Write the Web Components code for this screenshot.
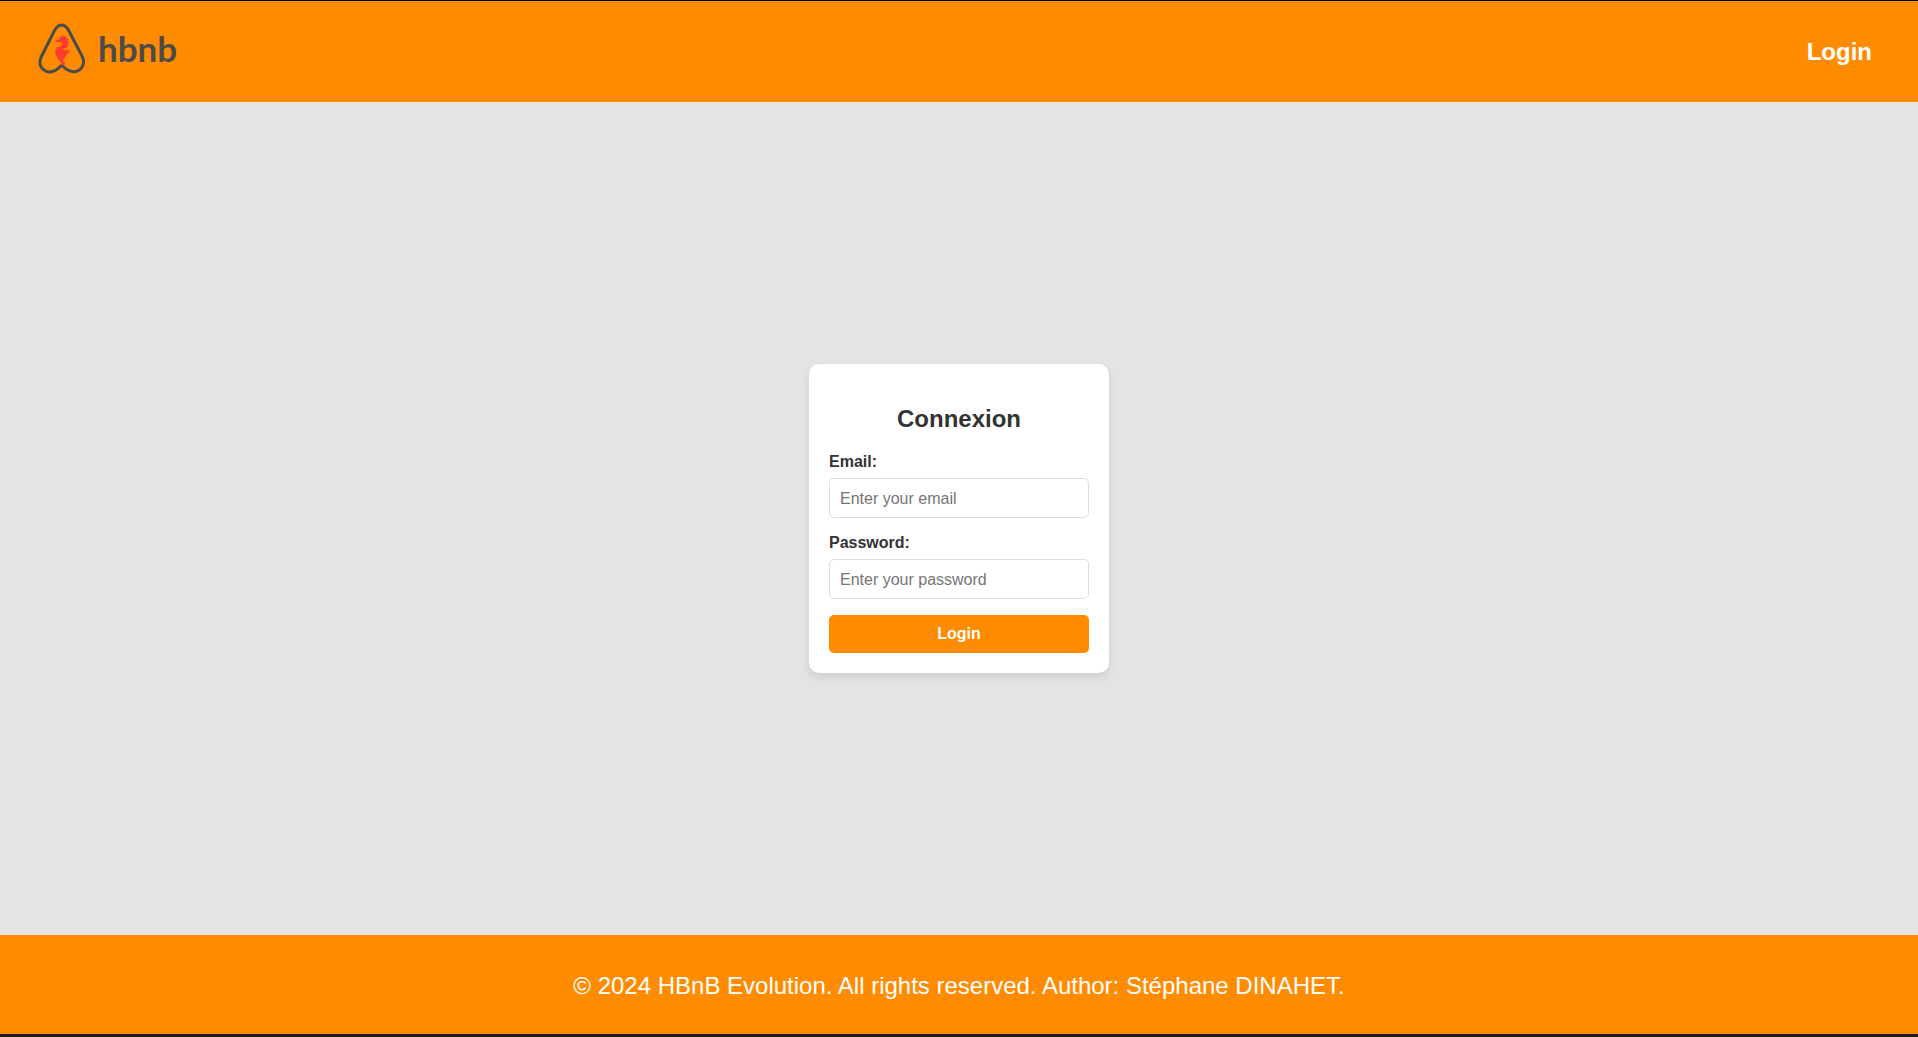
<!DOCTYPE html>
<html lang="fr">
<head>
<meta charset="utf-8">
<meta name="viewport" content="width=device-width, initial-scale=1">
<title>HBnB - Login</title>
<style>
  html, body { height: 100%; margin: 0; }
  body {
    --brand: #ff8c00;
    --ink: #333;
    font-family: "Liberation Sans", Arial, sans-serif;
    font-size: 16px;
    color: var(--ink);
    background: #e4e4e4;
  }
</style>
</head>
<body>
<hbnb-page>
  <hbnb-header slot="header"><hbnb-logo></hbnb-logo><a slot="nav" href="#login">Login</a></hbnb-header>
  <hbnb-login-card>Connexion</hbnb-login-card>
  <hbnb-footer slot="footer">© 2024 HBnB Evolution. All rights reserved. Author: Stéphane DINAHET.</hbnb-footer>
</hbnb-page>

<script>
class Base extends HTMLElement {
  constructor() {
    super();
    this.attachShadow({ mode: "open" }).innerHTML = this.constructor.markup;
  }
}

customElements.define("hbnb-page", class extends Base {
  static markup = `
    <style>
      :host { display: flex; flex-direction: column; box-sizing: border-box; min-height: 100%;
              border-top: 1px solid #000; border-bottom: 3px solid #1c191f; }
      main { flex: 1; display: flex; align-items: center; justify-content: center; }
    </style>
    <slot name="header"></slot>
    <main><slot></slot></main>
    <slot name="footer"></slot>`;
});

customElements.define("hbnb-header", class extends Base {
  static markup = `
    <style>
      :host { display: block; background: var(--brand); }
      header { display: flex; align-items: center; justify-content: space-between; padding: 19px 36px 26px; }
      nav { padding: 8px 10px 0; }
      ::slotted(a) { color: #fff; font-size: 24px; line-height: 28px; font-weight: bold; text-decoration: none; }
    </style>
    <header><slot></slot><nav><slot name="nav"></slot></nav></header>`;
});

customElements.define("hbnb-logo", class extends Base {
  static markup = `
    <style>
      :host { display: flex; align-items: flex-start; gap: 10px; height: 56px; color: #4c4b48; }
      svg { display: block; width: 52px; height: 56px; }
      span { padding-top: 8px; font: bold 35px/40px Lato, sans-serif; }
    </style>
    <svg viewBox="36 20 52 56" aria-hidden="true">
      <path d="M56.5 27.8 Q58.7 25 61.7 25 Q65 25 67.2 28.2 Q69 30.700 70.500 34 L82.500 57 Q84.200 60.500 83.400 63.800 C82.200 69.500 76.500 72.800 71 71.300 C67.500 70.400 64.300 67.800 61.700 65 C59 68 56 70.500 52.500 71.500 C47 73 41.300 69.700 40 64 C39.300 60.800 40.100 59 41.400 56.500 L53.500 32.500 Q55 29.500 56.500 27.800Z" fill="none" stroke="#4a4b4b" stroke-width="3" stroke-linejoin="round"/>
      <path d="M55.300 41.800 L55.800 40.600 L59 39.400 C59 37.800 60 36.800 61.300 36.500 L62.200 35 L63.400 36.300 L66 36.200 L66 37.800 L68.300 39.200 L67.500 40.800 L69.400 42.600 L67.800 43.800 L69 45.800 L67 46.500 L66.400 48.200 L64 48 C63 49 63.200 50 64.300 50.200 L69.800 50 L68.600 51.800 L69.200 53 L67 53.500 L66.500 55.300 C65.800 57.500 63.400 58.800 62.800 60.500 C63 61.300 65.200 62 65 63.600 C64.500 66 61 66 60 64 C60.800 63 62 65 62.800 63.800 C62.500 62.300 60 62.800 59.600 60.400 L57.600 58.800 L57 56.800 L55.300 54.600 L55.800 52.700 L54.900 50.700 L56.400 49 L57 47 L59 46.700 C61.200 46.200 63 44.800 62.200 43.200 C61 41.500 59.200 41.800 57.800 42.300 Z" fill="#f93b30"/>
    </svg>
    <span>hbnb</span>`;
});

customElements.define("hbnb-login-card", class extends Base {
  static markup = `
    <style>
      :host { display: block; box-sizing: border-box; width: 300px; max-width: 100%; padding: 20px;
              background: #fff; border-radius: 10px; box-shadow: 0 4px 8px rgba(0,0,0,.1); }
      h2 { margin: 20px 0; font-size: 24px; line-height: 29px; text-align: center; }
      form { display: flex; flex-direction: column; }
      label { font-weight: bold; line-height: 18px; margin-bottom: 7px; }
      input { box-sizing: border-box; height: 40px; width: 100%; margin: 0 0 16px; padding: 11px 10px 9px;
              border: 1px solid #ddd; border-radius: 5px; font: inherit; color: inherit; background: #fff; }
      input::placeholder { color: #757575; }
      button { padding: 10px; border: 0; border-radius: 5px; background: var(--brand); color: #fff;
               font: inherit; font-weight: bold; line-height: 18px; cursor: pointer; }
    </style>
    <h2><slot></slot></h2>
    <form>
      <label for="email">Email:</label>
      <input id="email" type="email" placeholder="Enter your email" required>
      <label for="password">Password:</label>
      <input id="password" type="password" placeholder="Enter your password" required>
      <button type="submit">Login</button>
    </form>`;
});

customElements.define("hbnb-footer", class extends Base {
  static markup = `
    <style>
      :host { display: block; background: var(--brand); color: #fff; }
      footer { padding: 37px 20px 35px; text-align: center; font-size: 24px; line-height: 27px; }
    </style>
    <footer><slot></slot></footer>`;
});
</script>
</body>
</html>
